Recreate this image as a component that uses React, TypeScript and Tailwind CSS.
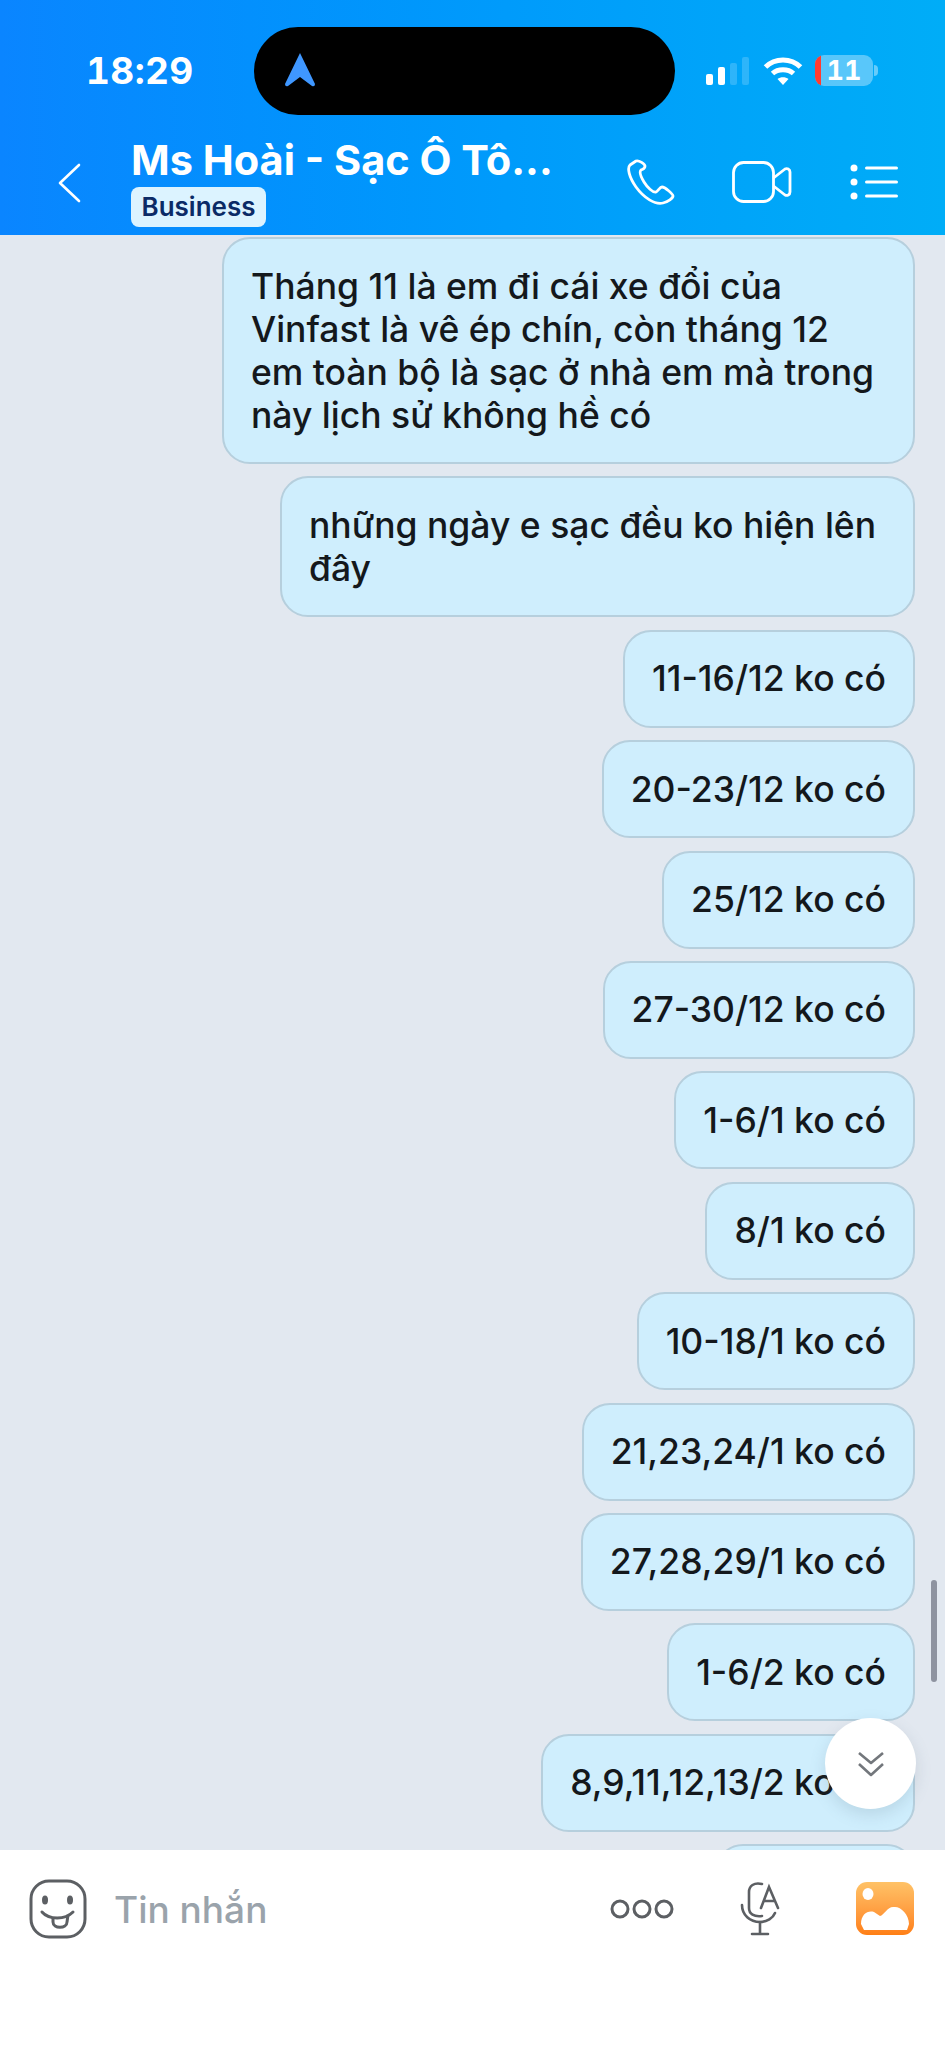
const MESSAGES = [
  { text: 'Tháng 11 là em đi cái xe đổi của Vinfast là vê ép chín, còn tháng 12 em toàn bộ là sạc ở nhà em mà trong này lịch sử không hề có', width: 'w-[693px]' },
  { text: 'những ngày e sạc đều ko hiện lên đây', width: 'w-[635px]' },
  { text: '11-16/12 ko có', width: 'w-fit' },
  { text: '20-23/12 ko có', width: 'w-fit' },
  { text: '25/12 ko có', width: 'w-fit' },
  { text: '27-30/12 ko có', width: 'w-fit' },
  { text: '1-6/1 ko có', width: 'w-fit' },
  { text: '8/1 ko có', width: 'w-fit' },
  { text: '10-18/1 ko có', width: 'w-fit' },
  { text: '21,23,24/1 ko có', width: 'w-fit' },
  { text: '27,28,29/1 ko có', width: 'w-fit' },
  { text: '1-6/2 ko có', width: 'w-fit' },
  { text: '8,9,11,12,13/2 ko có', width: 'w-fit' },
];

function StatusBar() {
  return (
    <div className="flex h-[115px] items-start pt-[27px]">
      <span className="ml-[86px] mt-[22px] w-[168px] text-[37px] font-bold leading-[44px] tracking-[0.4px] tabular-nums text-white">18:29</span>
      <div className="flex h-[88px] w-[421px] items-center rounded-full bg-black pl-[31px]">
        <svg width="30" height="34" viewBox="0 0 30 34" className="-mt-[3px]">
          <path d="M15 0 L30 31 Q30 34 27 33 L15 24 L3 33 Q0 34 0 31 Z" fill="#3f97ff" />
        </svg>
      </div>
      <div className="ml-[31px] mt-[28px] flex items-center">
        <svg width="44" height="28" viewBox="0 0 44 28">
          <rect x="0" y="17" width="7" height="11" rx="2" fill="#fff" />
          <rect x="12" y="10" width="7" height="18" rx="2" fill="#fff" />
          <rect x="24" y="6" width="7" height="22" rx="2" fill="#ffffff" fillOpacity="0.18" />
          <rect x="36" y="0" width="7" height="28" rx="2" fill="#ffffff" fillOpacity="0.18" />
        </svg>
        <svg width="40" height="28" viewBox="0 0 40 28" className="ml-[13px]" fill="none" stroke="#fff" strokeWidth="5">
          <path d="M2.5 10 C12 0.5 28 0.5 37.5 10" />
          <path d="M9.5 16.5 C15 11.5 25 11.5 30.5 16.5" />
          <path d="M20 28 L14.5 22 C17.5 19.5 22.5 19.5 25.5 22 Z" fill="#fff" stroke="none" />
        </svg>
        <div className="relative ml-[12px] flex h-[31px] w-[58px] items-center justify-center overflow-hidden rounded-[9px] bg-white/35">
          <div className="absolute bottom-0 left-0 top-0 w-[6px] bg-[#ff3b30]" />
          <span className="text-[27px] font-bold leading-none tabular-nums text-white">11</span>
        </div>
        <div className="ml-[1px] h-[11px] w-[4px] rounded-r-full bg-white/40" />
      </div>
    </div>
  );
}

function Header() {
  return (
    <header className="h-[235px] shrink-0 bg-gradient-to-r from-[#0a85ff] to-[#00adf7]">
      <StatusBar />
      <div className="flex h-[120px] items-start">
        <svg width="24" height="40" viewBox="0 0 24 40" className="ml-[57px] mt-[48px]" fill="none" stroke="#fff" strokeWidth="2.6" strokeLinecap="round" strokeLinejoin="round">
          <path d="M22 2 L3 20 L22 38" />
        </svg>
        <div className="ml-[50px] w-[482px]">
          <div className="mt-[21px] text-[41.5px] font-bold leading-[48px] text-white">Ms Hoài - Sạc Ô Tô...</div>
          <div className="mt-[3px] flex h-[40px] w-[135px] items-center justify-center rounded-[8px] bg-[#dcf3ff] text-[26px] font-semibold leading-none text-[#0b2a66]">Business</div>
        </div>
        <svg width="48" height="46" viewBox="0 0 48 46" className="ml-[14px] mt-[44px]" fill="none" stroke="#fff" strokeWidth="2.8" strokeLinejoin="round">
          <path d="M9 2 L3 6 C0 9 2 18 9 28 C17 39 28 46 36 44 C41 43 46 39 46 37 C46 35 38 28 35 28 C33 28 31 32 29 33 C26 34 20 28 17 23 C14 18 12 13 14 11 C16 10 18 10 18 7 C18 5 12 1 9 2 Z" />
        </svg>
        <svg width="60" height="42" viewBox="0 0 60 42" className="ml-[57px] mt-[46px]" fill="none" stroke="#fff" strokeWidth="2.8" strokeLinejoin="round">
          <rect x="1.5" y="1.5" width="40" height="39" rx="10" />
          <path d="M41.5 17 L53 8 C55 7 58 8 58 11 L58 31 C58 34 55 35 53 34 L41.5 25" />
        </svg>
        <svg width="48" height="36" viewBox="0 0 48 36" className="ml-[58px] mt-[49px]" fill="#fff">
          <circle cx="4" cy="4" r="3.5" />
          <circle cx="4" cy="18" r="3.5" />
          <circle cx="4" cy="32" r="3.5" />
          <rect x="15" y="2.5" width="33" height="3" rx="1.5" />
          <rect x="15" y="16.5" width="33" height="3" rx="1.5" />
          <rect x="15" y="30.5" width="33" height="3" rx="1.5" />
        </svg>
      </div>
    </header>
  );
}

function Bubble({ text, width }: { text: string; width: string }) {
  return (
    <div className={`${width} shrink-0 rounded-[28px] border-2 border-[#b6cfdd] bg-[#cfeefd] px-[27px] py-[25.5px] text-[35.5px] font-[550] leading-[43px] text-[#14181c]`}>
      {text}
    </div>
  );
}

function Footer() {
  return (
    <footer className="flex h-[198px] shrink-0 items-start bg-white pt-[29px]">
      <svg width="58" height="60" viewBox="0 0 58 60" className="ml-[29px]" fill="none" stroke="#5c5f63" strokeWidth="3">
        <rect x="2" y="2" width="54" height="56" rx="18" />
        <ellipse cx="16" cy="21" rx="3" ry="4.5" fill="#5c5f63" stroke="none" />
        <ellipse cx="41" cy="21" rx="3" ry="4.5" fill="#5c5f63" stroke="none" />
        <path d="M13 33 C20 41 36 41 44 33" strokeLinecap="round" />
        <path d="M24 39 L24 43 C24 50 38 50 38 43 L39 36" />
      </svg>
      <span className="ml-[27px] mt-[7px] w-[497px] text-[37px] font-medium leading-[48px] text-[#9aa3ab]">Tin nhắn</span>
      <svg width="64" height="20" viewBox="0 0 64 20" className="ml-[-1px] mt-[20px]" fill="none" stroke="#5c5f63" strokeWidth="3">
        <circle cx="10" cy="10" r="8" />
        <circle cx="32" cy="10" r="8" />
        <circle cx="54" cy="10" r="8" />
      </svg>
      <svg width="40" height="54" viewBox="0 0 40 54" className="ml-[66px] mt-[3px]" fill="none" stroke="#5c5f63" strokeWidth="2.6" strokeLinecap="round">
        <path d="M22 2 C14 0 9 4 9 10 L9 26 C9 32 14 35 22 34" />
        <path d="M2 23 C2 33 10 40 20 40 C27 40 33 36 35 31" />
        <path d="M20 40 L20 51 M12 52 L28 52" />
        <path d="M21 26 L29 5 L38 26 M24 19 L35 19" />
      </svg>
      <div className="relative ml-[76px] mt-[3px] h-[53px] w-[58px] overflow-hidden rounded-[11px] bg-gradient-to-b from-[#ffc266] to-[#ff7f14]">
        <svg width="58" height="53" viewBox="0 0 58 53" className="absolute inset-0" fill="#fff">
          <ellipse cx="12" cy="12" rx="5.5" ry="6" />
          <path d="M5 42 C5 32 12 28 18 30 L24 34 C28 33 32 24 38 25 C44 24 53 32 53 42 L51 48 L8 48 Z" />
        </svg>
      </div>
    </footer>
  );
}

export default function App() {
  return (
    <div className="flex h-[2048px] w-[945px] flex-col overflow-hidden bg-white font-['Inter',sans-serif]">
      <Header />
      <main className="relative flex min-h-0 flex-1 flex-col items-end gap-[12.4px] overflow-hidden bg-[#e2e8f0] pr-[30px] pt-[2px]">
        {MESSAGES.map((m) => (
          <Bubble key={m.text} text={m.text} width={m.width} />
        ))}
        <div className="h-[98px] w-[200px] shrink-0 rounded-[28px] border-2 border-[#b6cfdd] bg-[#cfeefd]" />
        <div className="absolute left-[931px] top-[1345px] h-[102px] w-[6px] rounded-full bg-[#8e93a0]" />
        <div className="absolute left-[825px] top-[1483px] flex h-[91px] w-[91px] items-center justify-center rounded-full bg-white shadow-[0_6px_16px_rgba(90,110,130,0.18)]">
          <svg width="26" height="26" viewBox="0 0 26 26" fill="none" stroke="#73777c" strokeWidth="2.6" strokeLinejoin="round">
            <path d="M1 2 L13 12 L25 2" />
            <path d="M1 13 L13 24 L25 13" />
          </svg>
        </div>
      </main>
      <Footer />
    </div>
  );
}
